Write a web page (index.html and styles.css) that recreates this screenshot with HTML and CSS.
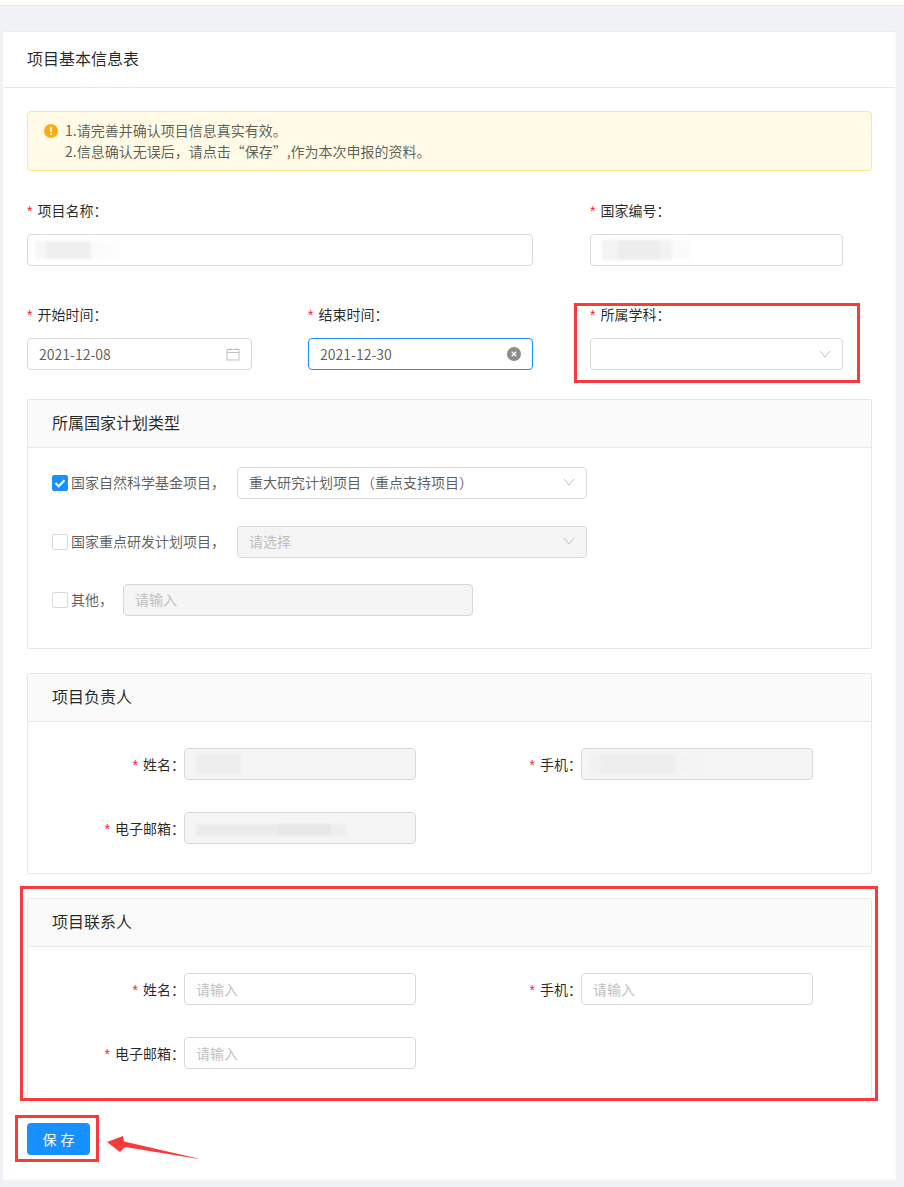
FILE: index.html
```html
<!DOCTYPE html>
<html lang="zh-CN">
<head>
<meta charset="utf-8">
<title>项目基本信息表</title>
<link rel="stylesheet" href="styles.css">
</head>
<body>
<div class="page">
  <div class="topbar"></div>
  <main class="sheet">
    <header class="sheet-head">项目基本信息表</header>
    <div class="sheet-body">
      <div class="alert">
        <svg class="alert-icon" viewBox="0 0 14 14" width="14" height="14"><circle cx="7" cy="7" r="7" fill="#faad14"/><rect x="6.2" y="3" width="1.6" height="5.2" rx=".6" fill="#fff"/><circle cx="7" cy="10.2" r=".95" fill="#fff"/></svg>
        <div class="alert-text">
          <div>1.请完善并确认项目信息真实有效。</div>
          <div>2.信息确认无误后，请点击“保存”,作为本次申报的资料。</div>
        </div>
      </div>

      <div class="form-grid">
        <div class="field span-two">
          <div class="field-label"><span class="req">*</span>项目名称：</div>
          <div class="control"><span class="smudge smudge-name"></span></div>
        </div>
        <div class="field field-third">
          <div class="field-label"><span class="req">*</span>国家编号：</div>
          <div class="control"><span class="smudge smudge-code"></span></div>
        </div>
        <div class="field field-narrow">
          <div class="field-label"><span class="req">*</span>开始时间：</div>
          <div class="control control-between">2021-12-08
            <svg class="icon" viewBox="0 0 14 14" width="14" height="14" fill="none" stroke="#bfbfbf" stroke-width="1"><rect x="1" y="2.5" width="12" height="10.5"/><path d="M1 5.5h12M4 1v2.5M10 1v2.5"/></svg>
          </div>
        </div>
        <div class="field field-narrow">
          <div class="field-label"><span class="req">*</span>结束时间：</div>
          <div class="control control-between control-focus">2021-12-30
            <svg class="icon" viewBox="0 0 14 14" width="14" height="14"><circle cx="7" cy="7" r="7" fill="#8c8c8c"/><path d="M4.7 4.7l4.6 4.6M9.3 4.7l-4.6 4.6" stroke="#fff" stroke-width="1.3"/></svg>
          </div>
        </div>
        <div class="field field-third">
          <div class="field-label"><span class="req">*</span>所属学科：</div>
          <div class="control control-end">
            <svg class="icon" viewBox="0 0 12 8" width="12" height="8" fill="none" stroke="#bfbfbf" stroke-width="1"><path d="M1 1l5 6 5-6"/></svg>
          </div>
        </div>
      </div>

      <section class="panel">
        <h2 class="panel-head">所属国家计划类型</h2>
        <div class="plan-body">
          <div class="plan-row">
            <span class="check check-on"><svg viewBox="0 0 16 16" width="16" height="16" fill="none" stroke="#fff" stroke-width="2"><path d="M3.5 8l3.2 3.2 5.8-6"/></svg></span>
            <span class="plan-label">国家自然科学基金项目，</span>
            <div class="control control-between control-plan">重大研究计划项目（重点支持项目）
              <svg class="icon" viewBox="0 0 12 8" width="12" height="8" fill="none" stroke="#bfbfbf" stroke-width="1"><path d="M1 1l5 6 5-6"/></svg>
            </div>
          </div>
          <div class="plan-row plan-row-second">
            <span class="check"></span>
            <span class="plan-label">国家重点研发计划项目，</span>
            <div class="control control-between control-plan control-off ph">请选择
              <svg class="icon" viewBox="0 0 12 8" width="12" height="8" fill="none" stroke="#bfbfbf" stroke-width="1"><path d="M1 1l5 6 5-6"/></svg>
            </div>
          </div>
          <div class="plan-row plan-row-third">
            <span class="check"></span>
            <span class="plan-label plan-label-short">其他，</span>
            <div class="control control-plan control-off ph">请输入</div>
          </div>
        </div>
      </section>

      <section class="panel">
        <h2 class="panel-head">项目负责人</h2>
        <div class="person-grid">
          <div class="person-field">
            <div class="person-label"><span class="req">*</span>姓名：</div>
            <div class="control control-person control-off"><span class="smudge smudge-pname"></span></div>
          </div>
          <div class="person-field">
            <div class="person-label"><span class="req">*</span>手机：</div>
            <div class="control control-person control-off"><span class="smudge smudge-phone"></span></div>
          </div>
          <div class="person-field">
            <div class="person-label"><span class="req">*</span>电子邮箱：</div>
            <div class="control control-person control-off"><span class="smudge smudge-mail"></span></div>
          </div>
        </div>
      </section>

      <section class="panel">
        <h2 class="panel-head">项目联系人</h2>
        <div class="person-grid">
          <div class="person-field">
            <div class="person-label"><span class="req">*</span>姓名：</div>
            <div class="control control-person ph">请输入</div>
          </div>
          <div class="person-field">
            <div class="person-label"><span class="req">*</span>手机：</div>
            <div class="control control-person ph">请输入</div>
          </div>
          <div class="person-field">
            <div class="person-label"><span class="req">*</span>电子邮箱：</div>
            <div class="control control-person ph">请输入</div>
          </div>
        </div>
      </section>

      <button class="save" type="button">保 存</button>
    </div>
  </main>

  <div class="mark mark-subject"></div>
  <div class="mark mark-contact"></div>
  <div class="mark mark-save"></div>
  <svg class="mark-arrow" viewBox="0 0 94 26" width="94" height="26"><path d="M1 8L17 2L18 7.5L92 24.5L91 24.7L19 13L14 18Z" fill="#f73b3b"/></svg>
</div>
</body>
</html>
```
FILE: styles.css
```css
* { box-sizing: border-box; }
html, body { margin: 0; padding: 0; }
body {
  background: #f0f2f5;
  font-family: "Noto Sans CJK SC", "Liberation Sans", sans-serif;
  font-size: 14px;
  line-height: 22px;
  color: rgba(0, 0, 0, .85);
  text-spacing-trim: space-all;
}
.page { position: relative; padding: 0 8px 8px 3px; overflow: hidden; }
.topbar {
  height: 6px;
  margin: 0 -8px 25px -3px;
  background: #fff;
  border-bottom: 1px solid #e6e8eb;
}
.sheet {
  background: #fff;
  border: 1px solid #fcfcfd;
  border-top-color: #e9ebee;
  border-radius: 2px;
}
.sheet-head {
  height: 56px;
  padding: 0 23px 4px;
  display: flex;
  align-items: center;
  font-size: 16px;
  border-bottom: 1px solid #e8e8e8;
}
.sheet-body { padding: 23px 23px 23px; }

.alert {
  height: 60px;
  display: flex;
  padding: 8px 15px;
  background: #fffbe6;
  border: 1px solid #ffe58f;
  border-radius: 4px;
}
.alert-icon { margin: 4px 7px 0 1px; flex: none; }
.alert-text { line-height: 21px; color: rgba(0, 0, 0, .65); }

.form-grid {
  display: grid;
  grid-template-columns: 281px 282px 282px;
  margin-top: 29px;
}
.field { margin-bottom: 38px; }
.field:nth-last-child(-n+3) { margin-bottom: 29px; }
.span-two { grid-column: span 2; padding-right: 57px; }
.field-narrow .control { width: 225px; }
.field-third { padding-right: 29px; }
.field-label { height: 22px; line-height: 20px; margin-bottom: 12px; }
.req { color: #f5222d; margin-right: 5px; font-family: "Liberation Sans", sans-serif; }

.control {
  height: 32px;
  padding: 0 11px;
  display: flex;
  align-items: center;
  background: #fff;
  border: 1px solid #d9d9d9;
  border-radius: 4px;
  color: rgba(0, 0, 0, .65);
  white-space: nowrap;
}
.control-between { justify-content: space-between; }
.control-end { justify-content: flex-end; }
.control-focus { border-color: #1890ff; }
.control-plan { width: 350px; padding-bottom: 2px; }
.control-off { background: #f5f5f5; }
.control-person { width: 232px; }
.ph { color: #bfbfbf; }
.icon { flex: none; }

.smudge { display: block; filter: blur(1.5px); }
.smudge-name { width: 94px; height: 18px; margin-left: -4px; background: linear-gradient(90deg, #f7f7f7 0 12%, #efefef 12% 60%, #fafafa 60%, #fff 100%); }
.smudge-code { width: 88px; height: 20px; background: linear-gradient(90deg, #f3f3f3 0 18%, #ecedec 18% 65%, #f1f2f2 65% 80%, #fbfbfb 80%); }
.smudge-pname { width: 84px; height: 20px; background: linear-gradient(90deg, #eeeeee 0 54%, #f5f5f5 54%, #f5f5f5 100%); }
.smudge-phone { width: 130px; height: 20px; margin-left: -5px; background: linear-gradient(90deg, #f1f1f1 0 10%, #eeeeee 10% 68%, #f3f3f3 68% 80%, #f5f5f5 100%); }
.smudge-mail { width: 150px; height: 12px; margin-top: 4px; background: linear-gradient(90deg, #ebebeb 0 55%, #e6e6e6 55% 90%, #eee 90%); }

.panel {
  border: 1px solid #e8e8e8;
  border-radius: 2px;
  margin-bottom: 24px;
}
.panel-head {
  height: 48px;
  margin: 0;
  padding: 0 24px 4px;
  display: flex;
  align-items: center;
  font-size: 16px;
  font-weight: 400;
  background: #fafafa;
  border-bottom: 1px solid #e8e8e8;
}
.plan-body { padding: 19px 24px 32px; }
.plan-row { display: flex; align-items: center; }
.plan-row-second { margin-top: 27px; }
.plan-row-third { margin-top: 26px; }
.plan-label { margin: 0 12px 0 3px; padding-bottom: 3px; color: rgba(0, 0, 0, .65); }
.plan-label-short { margin-right: 10px; }
.check {
  width: 16px;
  height: 16px;
  flex: none;
  background: #fff;
  border: 1px solid #d9d9d9;
  border-radius: 2px;
  display: block;
}
.check svg { display: block; margin: -1px; }
.check-on { background: #1890ff; border-color: #1890ff; }

.person-grid {
  display: grid;
  grid-template-columns: 397px 397px;
  row-gap: 32px;
  padding: 26px 0 29px;
}
.person-field { display: flex; align-items: center; }
.person-label { width: 157px; margin-right: -1px; text-align: right; }

.save {
  display: block;
  width: 63px;
  height: 32px;
  padding: 0;
  font: inherit;
  word-spacing: 1px;
  color: #fff;
  background: #1890ff;
  border: 0;
  border-radius: 4px;
  margin: 24px 0 1px;
}

.mark { position: absolute; border: 3px solid #f73b3b; }
.mark-subject { left: 574px; top: 303px; width: 286px; height: 80px; }
.mark-contact { left: 20px; top: 886px; width: 858px; height: 215px; }
.mark-save { left: 15px; top: 1115px; width: 84px; height: 47px; }
.mark-arrow { position: absolute; left: 106px; top: 1134px; }
```
